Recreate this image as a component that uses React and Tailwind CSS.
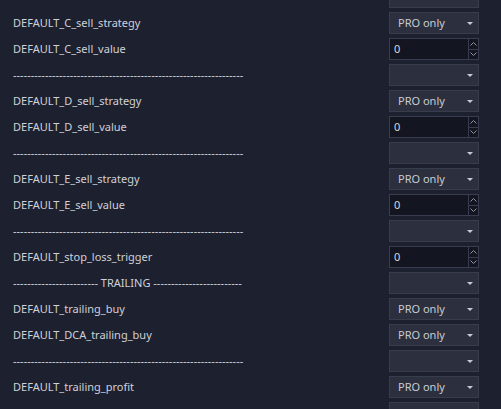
import React from "react";

const dashes = (n) => "-".repeat(n);
const line = dashes(65);

const rows = [
  { label: "", type: "select", value: "" },
  { label: "DEFAULT_C_sell_strategy", type: "select", value: "PRO only" },
  { label: "DEFAULT_C_sell_value", type: "number", value: "0" },
  { label: line, type: "select", value: "" },
  { label: "DEFAULT_D_sell_strategy", type: "select", value: "PRO only" },
  { label: "DEFAULT_D_sell_value", type: "number", value: "0" },
  { label: line, type: "select", value: "" },
  { label: "DEFAULT_E_sell_strategy", type: "select", value: "PRO only" },
  { label: "DEFAULT_E_sell_value", type: "number", value: "0" },
  { label: line, type: "select", value: "" },
  { label: "DEFAULT_stop_loss_trigger", type: "number", value: "0" },
  { label: dashes(24) + " TRAILING " + dashes(25), type: "select", value: "" },
  { label: "DEFAULT_trailing_buy", type: "select", value: "PRO only" },
  { label: "DEFAULT_DCA_trailing_buy", type: "select", value: "PRO only" },
  { label: line, type: "select", value: "" },
  { label: "DEFAULT_trailing_profit", type: "select", value: "PRO only" },
  { label: "", type: "select", value: "" },
];

function Select({ value }) {
  return (
    <div className="flex h-[22px] w-[90px] items-center justify-between border border-[#393c4d] bg-[#2c2f3e] pl-[8px] pr-[5px] text-[11px] text-[#c9cbd2]">
      <span>{value}</span>
      <svg width="6" height="3" viewBox="0 0 6 3">
        <path d="M0 0h6L3 3z" fill="#c9cbd2" />
      </svg>
    </div>
  );
}

function NumberInput({ value }) {
  return (
    <div className="flex h-[22px] w-[90px] border border-[#3a3d50] bg-[#131621] text-[11px] text-[#d4d6dc]">
      <div className="flex flex-1 items-center pl-[4px]">{value}</div>
      <div className="flex w-[10px] flex-col border-l border-[#3a3d50]">
        <div className="flex flex-1 items-center justify-center border-b border-[#3a3d50]">
          <svg width="7" height="4" viewBox="0 0 7 4">
            <path d="M0.5 3.5L3.5 0.5L6.5 3.5" fill="none" stroke="#8e91a0" strokeWidth="1" />
          </svg>
        </div>
        <div className="flex flex-1 items-center justify-center">
          <svg width="7" height="4" viewBox="0 0 7 4">
            <path d="M0.5 0.5L3.5 3.5L6.5 0.5" fill="none" stroke="#8e91a0" strokeWidth="1" />
          </svg>
        </div>
      </div>
    </div>
  );
}

export default function App() {
  return (
    <div
      className="h-[409px] w-[501px] overflow-hidden bg-[#1d202f]"
      style={{ fontFamily: '"Noto Sans", "Open Sans", sans-serif' }}
    >
      <div className="-mt-[14px] flex flex-col">
        {rows.map((row, i) => (
          <div key={i} className="mb-[4px] flex h-[22px] items-center pl-[13px] pr-[22px]">
            <span className="whitespace-pre text-[11px] text-[#cfd1d8]">{row.label}</span>
            <div className="ml-auto">
              {row.type === "select" ? <Select value={row.value} /> : <NumberInput value={row.value} />}
            </div>
          </div>
        ))}
      </div>
    </div>
  );
}
